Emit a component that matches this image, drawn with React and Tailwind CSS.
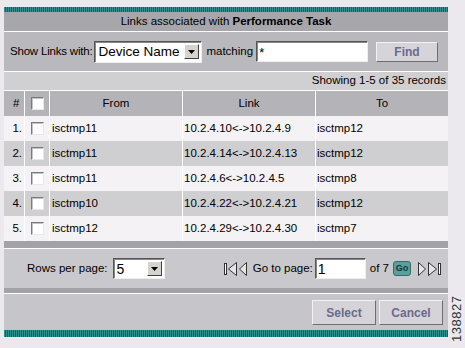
import React from "react";

const font = "font-['Liberation_Sans',Arial,sans-serif]";

function Stripe({ h }) {
  return (
    <div
      className={`${h} bg-[repeating-linear-gradient(90deg,#2f8f8c_0px,#2f8f8c_1px,#176461_1px,#176461_2px)]`}
    />
  );
}

function Check() {
  return (
    <div className="w-[13px] h-[13px] bg-white border border-t-[#7a797d] border-l-[#7a797d] border-b-[#e8e8e8] border-r-[#e8e8e8] shadow-[inset_1px_1px_0_#c4c3c6]" />
  );
}

function DropBtn() {
  return (
    <div className="w-[15px] h-[15px] bg-[#d6d3ce] border border-t-white border-l-white border-b-[#404040] border-r-[#404040] flex items-center justify-center">
      <svg width="7" height="4" viewBox="0 0 7 4">
        <polygon points="0,0 7,0 3.5,4" fill="#000" />
      </svg>
    </div>
  );
}

function Tri({ dir, bar }) {
  const w = bar ? 13 : 8;
  return (
    <svg width={w} height="14" viewBox={`0 0 ${w} 14`} className="block">
      {dir === "left" ? (
        <>
          {bar && <rect x="0.5" y="1.5" width="2" height="11" fill="#fff" stroke="#333" strokeWidth="1" />}
          <polygon
            points={bar ? "12.5,0.5 12.5,13.5 4.5,7" : "7.5,0.5 7.5,13.5 0.5,7"}
            fill="#e6e6e8"
            stroke="#333"
            strokeWidth="1"
          />
        </>
      ) : (
        <>
          <polygon
            points={bar ? "0.5,0.5 0.5,13.5 8.5,7" : "0.5,0.5 0.5,13.5 7.5,7"}
            fill="#e6e6e8"
            stroke="#333"
            strokeWidth="1"
          />
          {bar && <rect x="10.5" y="1.5" width="2" height="11" fill="#fff" stroke="#333" strokeWidth="1" />}
        </>
      )}
    </svg>
  );
}

function Btn({ children, w }) {
  return (
    <div
      className={`${w} h-[25px] bg-[#d5d3d7] border border-t-[#f2f2f2] border-l-[#f2f2f2] border-b-[#6e6d71] border-r-[#6e6d71] flex items-center justify-center text-[12px] font-bold text-[#6a6a8e]`}
    >
      {children}
    </div>
  );
}

const rows = [
  ["1.", "isctmp11", "10.2.4.10<->10.2.4.9", "isctmp12"],
  ["2.", "isctmp11", "10.2.4.14<->10.2.4.13", "isctmp12"],
  ["3.", "isctmp11", "10.2.4.6<->10.2.4.5", "isctmp8"],
  ["4.", "isctmp10", "10.2.4.22<->10.2.4.21", "isctmp12"],
  ["5.", "isctmp12", "10.2.4.29<->10.2.4.30", "isctmp7"],
];

export default function App() {
  return (
    <div className={`relative w-[465px] h-[348px] bg-[#ebe9ed] pt-[7px] pl-[4px] overflow-hidden ${font} text-[11.5px] text-black leading-none whitespace-nowrap`}>
      <div className="w-[444px] flex flex-col">
        <Stripe h="h-[5px]" />
        <div className="h-[19px] bg-[#a7a6aa] flex items-center justify-center">
          Links associated with&nbsp;<b>Performance Task</b>
        </div>
        <div className="h-px bg-white" />
        <div className="h-[39px] bg-[#b9b8bc] flex items-center pl-[6px]">
          <span className="tracking-[-0.2px]">Show Links with:</span>
          <div className="ml-[2px] w-[108px] h-[22px] bg-white border border-t-[#555] border-l-[#555] border-b-[#eee] border-r-[#eee] flex items-center justify-between pl-[3px] pr-[2px] shadow-[inset_1px_1px_0_#888]">
            <span className="text-[13.5px]">Device Name</span>
            <DropBtn />
          </div>
          <span className="ml-[4px]">matching</span>
          <div className="ml-[3px] w-[112px] h-[21px] bg-white border border-t-[#555] border-l-[#555] border-b-[#eee] border-r-[#eee] flex items-center pl-[2px] shadow-[inset_1px_1px_0_#888]">
            <span className="text-[13px] mt-[2px]">*</span>
          </div>
          <div className="ml-auto mr-[10px] w-[62px] h-[20px] bg-[#d6d4d8] border border-t-[#f2f2f2] border-l-[#f2f2f2] border-b-[#6e6d71] border-r-[#6e6d71] flex items-center justify-center text-[12px] font-bold text-[#6a6a8e]">
            Find
          </div>
        </div>
        <div className="h-px bg-white" />
        <div className="h-[18px] bg-[#d0cfd2] flex items-center justify-end pr-[2px]">
          Showing 1-5 of 35 records
        </div>
        <div className="h-px bg-white" />
        <div className="grid grid-cols-[20px_24px_132px_132px_132px] gap-x-px bg-white">
          <div className="h-[25px] bg-[#b4b3b7] flex items-center pl-[9px]">#</div>
          <div className="h-[25px] bg-[#b4b3b7] flex items-center pl-[6px]"><Check /></div>
          <div className="h-[25px] bg-[#b4b3b7] flex items-center justify-center">From</div>
          <div className="h-[25px] bg-[#b4b3b7] flex items-center justify-center">Link</div>
          <div className="h-[25px] bg-[#b4b3b7] flex items-center justify-center">To</div>
          {rows.map((r, i) => {
            const bg = i % 2 === 0 ? "bg-[#f4f2f5]" : "bg-[#cfced1]";
            return (
              <React.Fragment key={i}>
                <div className={`h-[25px] ${bg} flex items-center justify-end pr-[2px]`}>{r[0]}</div>
                <div className={`h-[25px] ${bg} flex items-center pl-[6px]`}><Check /></div>
                <div className={`h-[25px] ${bg} flex items-center pl-[2px]`}>{r[1]}</div>
                <div className={`h-[25px] ${bg} flex items-center pl-[1px]`}>{r[2]}</div>
                <div className={`h-[25px] ${bg} flex items-center pl-[1px]`}>{r[3]}</div>
              </React.Fragment>
            );
          })}
        </div>
        <div className="h-[7px] bg-[#a3a2a6]" />
        <div className="h-px bg-white" />
        <div className="h-[39px] bg-[#c9c8cc] flex items-center pl-[23px] pr-[7px]">
          <span>Rows per page:</span>
          <div className="ml-[5px] w-[52px] h-[21px] bg-white border border-t-[#555] border-l-[#555] border-b-[#eee] border-r-[#eee] flex items-center justify-between pl-[3px] pr-[2px] shadow-[inset_1px_1px_0_#888]">
            <span className="text-[14px]">5</span>
            <DropBtn />
          </div>
          <div className="ml-auto flex items-center">
            <Tri dir="left" bar />
            <span className="ml-[2px]"><Tri dir="left" /></span>
            <span className="ml-[6px]">Go to page:</span>
            <div className="ml-[2px] w-[51px] h-[21px] bg-white border border-t-[#555] border-l-[#555] border-b-[#eee] border-r-[#eee] flex items-center pl-[2px] shadow-[inset_1px_1px_0_#888]">
              <span className="text-[14px]">1</span>
            </div>
            <span className="ml-[4px]">of 7</span>
            <div className="ml-[4px] w-[18px] h-[15px] rounded-[3px] bg-[#5d9d9b] border border-[#2f6f6d] flex items-center justify-center text-[9px] font-bold text-[#123a3a]">
              Go
            </div>
            <span className="ml-[7px]"><Tri dir="right" /></span>
            <span className="ml-[2px]"><Tri dir="right" bar /></span>
          </div>
        </div>
        <div className="h-[5px] bg-[#a3a2a6]" />
        <div className="h-px bg-white" />
        <div className="h-[36px] bg-[#c6c5c9] flex items-center justify-end pr-[5px] gap-[3px] pt-[1px]">
          <Btn w="w-[64px]">Select</Btn>
          <Btn w="w-[64px]">Cancel</Btn>
        </div>
        <Stripe h="h-[7px]" />
      </div>
      <div className="absolute left-[450px] top-[342px] origin-top-left -rotate-90 text-[13px] text-[#333] tracking-[0.5px]">
        138827
      </div>
    </div>
  );
}
